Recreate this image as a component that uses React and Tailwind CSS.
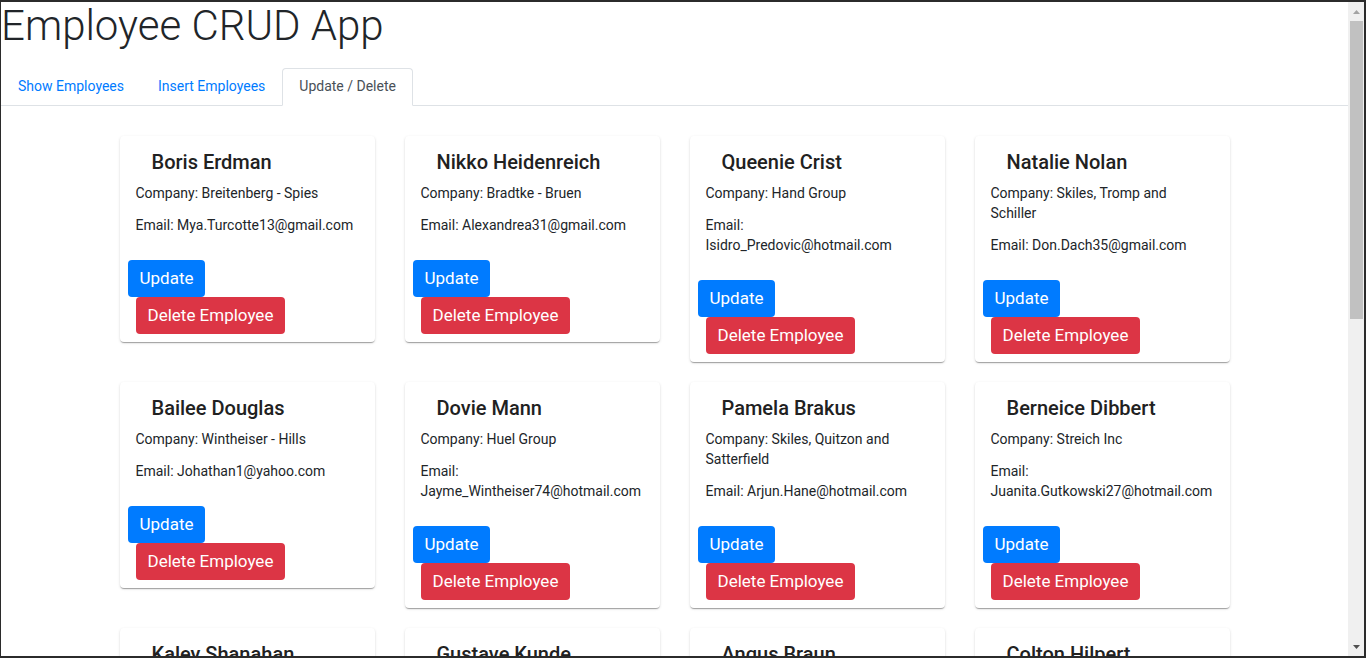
import React from "react";

const employees = [
  { name: "Boris Erdman", company: "Breitenberg - Spies", email: "Mya.Turcotte13@gmail.com" },
  { name: "Nikko Heidenreich", company: "Bradtke - Bruen", email: "Alexandrea31@gmail.com" },
  { name: "Queenie Crist", company: "Hand Group", email: "Isidro_Predovic@hotmail.com" },
  { name: "Natalie Nolan", company: "Skiles, Tromp and Schiller", email: "Don.Dach35@gmail.com" },
  { name: "Bailee Douglas", company: "Wintheiser - Hills", email: "Johathan1@yahoo.com" },
  { name: "Dovie Mann", company: "Huel Group", email: "Jayme_Wintheiser74@hotmail.com" },
  { name: "Pamela Brakus", company: "Skiles, Quitzon and Satterfield", email: "Arjun.Hane@hotmail.com" },
  { name: "Berneice Dibbert", company: "Streich Inc", email: "Juanita.Gutkowski27@hotmail.com" },
  { name: "Kaley Shanahan", company: "Rempel LLC", email: "Mariane.Kuhn@yahoo.com" },
  { name: "Gustave Kunde", company: "Lind - Ortiz", email: "Ellie88@gmail.com" },
  { name: "Angus Braun", company: "Kirlin Group", email: "Talon_Wolff@hotmail.com" },
  { name: "Colton Hilpert", company: "Mraz and Sons", email: "Rosalind.Yost@gmail.com" },
];

const tabs = ["Show Employees", "Insert Employees", "Update / Delete"];

const EmployeeCard = ({ employee }) => {
  return (
    <div className="rounded bg-white shadow-[0_2px_1px_-1px_rgba(0,0,0,0.2),0_1px_1px_0_rgba(0,0,0,0.14),0_1px_3px_0_rgba(0,0,0,0.12)]">
      <div className="px-4 pt-4 pb-[25px]">
        <h5 className="pl-4 text-[20px] leading-5 font-medium text-[#212121]">{employee.name}</h5>
        <p className="mt-[11px] text-[14px] leading-5 text-[#212529]">Company: {employee.company}</p>
        <p className="mt-3 text-[14px] leading-5 text-[#212529]">Email: {employee.email}</p>
      </div>
      <div className="flex flex-col items-start pb-2">
        <button className="ml-2 h-[37px] rounded bg-[#007bff] px-3 text-[17px] text-white">Update</button>
        <button className="ml-4 h-[37px] rounded bg-[#dc3545] px-3 text-[17px] text-white">Delete Employee</button>
      </div>
    </div>
  );
};

const Scrollbar = () => (
  <div className="flex w-4 flex-col bg-[#f0f0f0]">
    <div className="flex h-[19px] items-center justify-center">
      <svg width="7" height="4" viewBox="0 0 7 4">
        <path d="M3.5 0 L7 4 L0 4 Z" fill="#a3a3a3" />
      </svg>
    </div>
    <div className="ml-[2px] mr-px h-[298px] bg-[#c1c1c1]" />
    <div className="flex-1" />
    <div className="flex h-[19px] items-center justify-center">
      <svg width="7" height="4" viewBox="0 0 7 4">
        <path d="M0 0 L7 0 L3.5 4 Z" fill="#505050" />
      </svg>
    </div>
  </div>
);

const App = () => {
  return (
    <div className="flex h-[658px] w-[1366px] flex-col overflow-hidden bg-[#2b2b2b] pt-[2px] pb-[2px] pl-px pr-[2px] font-['Roboto',sans-serif]">
      <div className="flex min-h-0 flex-1">
        <main className="min-w-0 flex-1 overflow-hidden bg-white">
          <h1 className="text-[42px] leading-[48px] font-light text-[#212529]">Employee CRUD App</h1>
          <nav className="mt-[18px] flex border-b border-[#dee2e6]">
            {tabs.map((tab, i) => {
              const active = i === tabs.length - 1;
              return (
                <a
                  key={tab}
                  className={
                    active
                      ? "-mb-px rounded-t border border-[#dee2e6] border-b-white bg-white px-4 pt-[7px] pb-[9px] text-[14px] leading-5 text-[#495057]"
                      : "-mb-px border border-transparent px-4 pt-[7px] pb-[9px] text-[14px] leading-5 text-[#007bff]"
                  }
                >
                  {tab}
                </a>
              );
            })}
          </nav>
          <section className="mx-auto mt-[30px] grid w-[1110px] grid-cols-4 items-start gap-x-[30px] gap-y-5">
            {employees.map((employee) => (
              <EmployeeCard key={employee.name} employee={employee} />
            ))}
          </section>
        </main>
        <Scrollbar />
      </div>
    </div>
  );
};

export default App;
